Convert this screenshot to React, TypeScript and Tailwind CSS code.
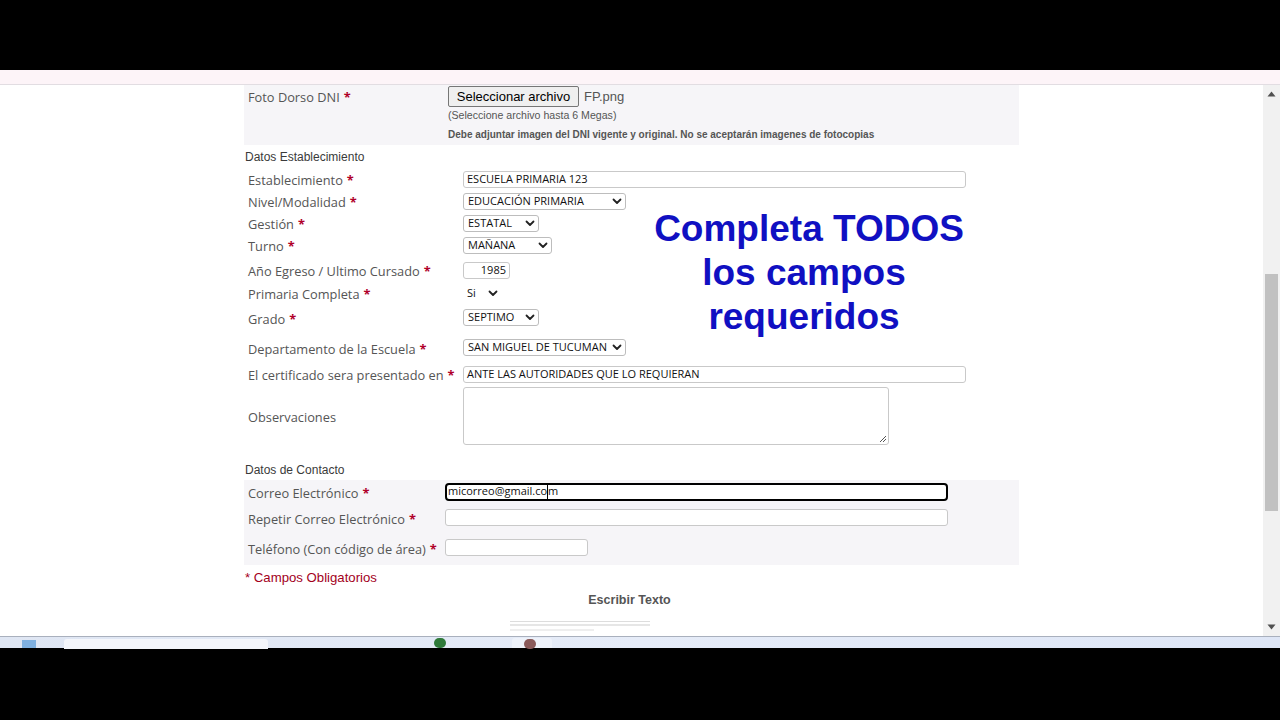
import React from "react";

const LABEL = "font-['Open_Sans',sans-serif] text-[12.8px] text-[#555]";
const FIELD = "font-['Open_Sans',sans-serif] text-[11px] text-[#111] uppercase";
const HEAD = "font-['Liberation_Sans',Arial,sans-serif] text-[12px] text-[#3a3a3a]";

function Req() {
  return <span className="ml-[4px] font-bold text-[#b0002a]">*</span>;
}

function Row({ h, label, req, lw = 219, children }: { h: number; label: string; req?: boolean; lw?: number; children?: React.ReactNode }) {
  return (
    <div className="flex items-center" style={{ height: h }}>
      <div className={`${LABEL} relative top-[2px] whitespace-nowrap pl-[4px]`} style={{ width: lw }}>
        {label}
        {req && <Req />}
      </div>
      {children}
    </div>
  );
}

function TextBox({ w, value, right }: { w: number; value?: string; right?: boolean }) {
  return (
    <div
      className={`${FIELD} flex h-[17px] items-center rounded-[3px] border border-[#c9c9c9] bg-white px-[3px] ${right ? "justify-end" : ""}`}
      style={{ width: w }}
    >
      {value}
    </div>
  );
}

function Chevron() {
  return (
    <svg width="10" height="7" viewBox="0 0 10 7" className="shrink-0">
      <path d="M1.5 1.5 L5 5 L8.5 1.5" fill="none" stroke="#222" strokeWidth="1.8" strokeLinecap="round" strokeLinejoin="round" />
    </svg>
  );
}

function Select({ w, value, bare }: { w: number; value: string; bare?: boolean }) {
  return (
    <div
      className={`${FIELD} flex h-[17px] items-center justify-between rounded-[3px] bg-white pl-[4px] pr-[3px] ${bare ? "" : "border border-[#bdbdbd]"}`}
      style={{ width: w }}
    >
      <span className={bare ? "normal-case" : ""}>{value}</span>
      <Chevron />
    </div>
  );
}

export default function App() {
  return (
    <div className="relative h-[720px] w-[1280px] overflow-hidden bg-black">
      <div className="h-[70px] bg-black" />
      <div className="h-[15px] border-b border-[#e2dde2] bg-[#fdf4f8]" />

      <div className="flex h-[551px]">
        <div className="h-full flex-1 bg-white">
          <div className="ml-[244px] w-[775px]">
            {/* Foto dorso */}
            <div className="flex h-[60px] bg-[#f6f5f8]">
              <div className={`${LABEL} w-[204px] pl-[4px] pt-[3px]`}>
                Foto Dorso DNI
                <Req />
              </div>
              <div className="pt-[1px] font-['Liberation_Sans',Arial,sans-serif]">
                <div className="flex items-center">
                  <div className="flex h-[21px] w-[131px] items-center justify-center rounded-[2px] border border-[#767676] bg-[#efefef] text-[13px] text-black">
                    Seleccionar archivo
                  </div>
                  <span className="ml-[5px] text-[13px] text-[#555]">FP.png</span>
                </div>
                <div className="mt-[1px] text-[10.6px] text-[#555]">(Seleccione archivo hasta 6 Megas)</div>
                <div className="mt-[3px] text-[10px] font-semibold text-[#555]">
                  Debe adjuntar imagen del DNI vigente y original. No se aceptarán imagenes de fotocopias
                </div>
              </div>
            </div>

            <div className={`${HEAD} flex h-[23px] items-center pl-[1px]`}>Datos Establecimiento</div>

            <Row h={22} label="Establecimiento" req>
              <TextBox w={503} value="ESCUELA PRIMARIA 123" />
            </Row>
            <Row h={22} label="Nivel/Modalidad" req>
              <Select w={163} value="EDUCACIÓN PRIMARIA" />
            </Row>
            <Row h={22} label="Gestión" req>
              <Select w={76} value="ESTATAL" />
            </Row>
            <Row h={22} label="Turno" req>
              <Select w={89} value="MAÑANA" />
            </Row>
            <Row h={28} label="Año Egreso / Ultimo Cursado" req>
              <TextBox w={47} value="1985" right />
            </Row>
            <Row h={18} label="Primaria Completa" req>
              <Select w={38} value="Si" bare />
            </Row>
            <Row h={31} label="Grado" req>
              <Select w={76} value="SEPTIMO" />
            </Row>
            <Row h={29} label="Departamento de la Escuela" req>
              <Select w={163} value="SAN MIGUEL DE TUCUMAN" />
            </Row>
            <Row h={24} label="El certificado sera presentado en" req>
              <TextBox w={503} value="ANTE LAS AUTORIDADES QUE LO REQUIERAN" />
            </Row>
            <Row h={60} label="Observaciones">
              <div className="relative h-[58px] w-[426px] rounded-[3px] border border-[#c9c9c9] bg-white">
                <svg width="8" height="8" viewBox="0 0 8 8" className="absolute bottom-[1px] right-[1px]">
                  <path d="M7 1 L1 7 M7 4 L4 7" stroke="#555" strokeWidth="1" />
                </svg>
              </div>
            </Row>

            <div className={`${HEAD} flex h-[34px] items-end pb-[1px] pl-[1px]`}>Datos de Contacto</div>

            <div className="bg-[#f6f5f8] pt-[2px] pb-[4px]">
              <Row h={19} label="Correo Electrónico" req lw={201}>
                <div className="flex h-[18px] w-[503px] items-center rounded-[4px] border-2 border-black bg-white pl-[1px] font-['Open_Sans',sans-serif] text-[11px] text-[#111]">
                  micorreo@gmail.co<span className="inline-block h-[14px] w-px bg-black" />m
                </div>
              </Row>
              <Row h={33} label="Repetir Correo Electrónico" req lw={201}>
                <TextBox w={503} />
              </Row>
              <Row h={27} label="Teléfono (Con código de área)" req lw={201}>
                <TextBox w={143} />
              </Row>
            </div>

            <div className="ml-[1px] mt-[3px] font-['Liberation_Sans',Arial,sans-serif] text-[13.2px] text-[#a3001b]">* Campos Obligatorios</div>
            <div className="-ml-[4px] mt-[3px] text-center font-['Liberation_Sans',Arial,sans-serif] text-[12.5px] font-bold text-[#555]">
              Escribir Texto
            </div>
            <div className="ml-[266px] mt-[11px] flex h-[12px] w-[140px] flex-col gap-[3px] border-t border-[#ddd] pt-[2px]">
              <div className="h-[2px] w-full bg-[#e6e6e6]" />
              <div className="h-[2px] w-[60%] bg-[#eee]" />
            </div>
          </div>
        </div>

        {/* scrollbar */}
        <div className="flex h-full w-[17px] flex-col items-center bg-[#f1f1f1]">
          <svg width="9" height="6" viewBox="0 0 9 6" className="mt-[6px]">
            <path d="M0.5 5.5 L4.5 0.5 L8.5 5.5 Z" fill="#505050" />
          </svg>
          <div className="mt-[177px] h-[237px] w-[13px] bg-[#c1c1c1]" />
          <div className="flex-1" />
          <svg width="9" height="6" viewBox="0 0 9 6" className="mb-[6px]">
            <path d="M0.5 0.5 L4.5 5.5 L8.5 0.5 Z" fill="#505050" />
          </svg>
        </div>
      </div>

      {/* taskbar strip */}
      <div className="relative h-[12px] border-t border-[#a9b0bd] bg-gradient-to-r from-[#dfe6f3] via-[#e6ecf8] to-[#dee6f6]">
        <div className="absolute left-[22px] top-[3px] h-[8px] w-[14px] bg-[#7fb0e0]" />
        <div className="absolute left-[64px] top-[2px] h-[10px] w-[204px] rounded-t-[3px] bg-[#f4f6fb]" />
        <div className="absolute left-[434px] top-[1px] h-[10px] w-[12px] rounded-full bg-[#2f7a3a]" />
        <div className="absolute left-[512px] top-[1px] h-[10px] w-[40px] rounded-t-[3px] bg-[#eef2fa]" />
        <div className="absolute left-[524px] top-[2px] h-[10px] w-[12px] rounded-full bg-[#8a5a5a]" />
      </div>

      {/* overlay message */}
      <div className="absolute left-[609px] top-[207px] w-[400px] text-center font-['Liberation_Sans',Arial,sans-serif] text-[37px] font-bold leading-[44px] text-[#1010c2]">
        <div>Completa TODOS</div>
        <div className="pr-[10px]">los campos</div>
        <div className="pr-[10px]">requeridos</div>
      </div>
    </div>
  );
}
